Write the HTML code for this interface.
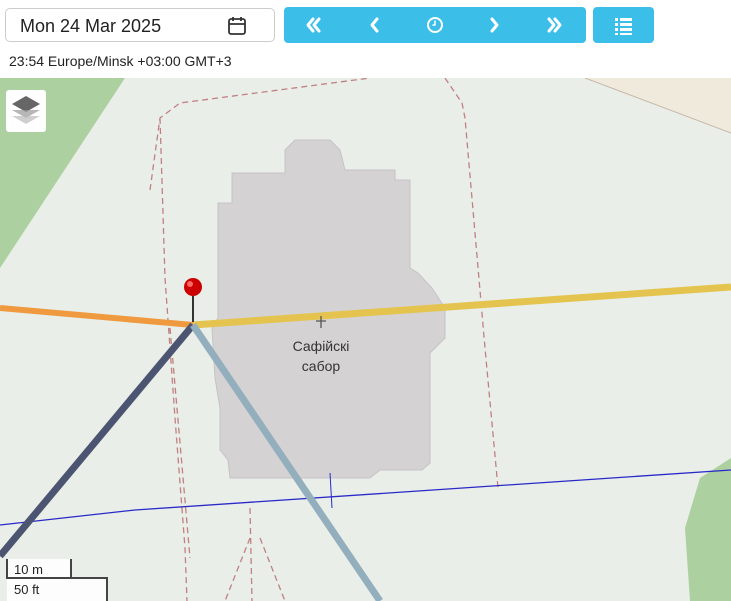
<html><head><style>
body{margin:0;width:731px;height:601px;overflow:hidden;font-family:"Liberation Sans",sans-serif;background:#fff;position:relative}
.date{position:absolute;left:5px;top:8px;width:270px;height:34px;border:1px solid #ccc;border-radius:5px;font-size:18px;line-height:34px;box-sizing:border-box;padding-left:14px;color:#222}
.btns{position:absolute;left:284px;top:7px;width:302px;height:36px;background:#3bbfe9;border-radius:4px}
.b2{position:absolute;left:593px;top:7px;width:61px;height:36px;background:#3bbfe9;border-radius:4px}
.tz{position:absolute;left:9px;top:53px;font-size:14px;color:#222}
</style></head><body>
<div class="date">Mon 24 Mar 2025
<svg style="position:absolute;right:27px;top:7px" width="20" height="20" viewBox="0 0 20 20" fill="none" stroke="#333" stroke-width="1.8"><rect x="2" y="3" width="16" height="15" rx="2"/><path d="M2 8H18M6 1v4M14 1v4"/></svg></div>
<div class="btns"><svg width="302" height="36" fill="none" stroke="#fff" stroke-width="3" stroke-linecap="round" stroke-linejoin="round">
<path d="M29 12l-5 6 5 6M35 12l-5 6 5 6"/><path d="M93 12l-5 6 5 6"/><circle cx="151" cy="18" r="7" stroke-width="2"/><path d="M151 14v4h-2" stroke-width="1.5"/><path d="M208 12l5 6-5 6"/><path d="M265 12l5 6-5 6M271 12l5 6-5 6"/></svg></div>
<div class="b2"><svg width="61" height="36" fill="#fff"><rect x="22" y="11" width="3" height="3"/><rect x="27" y="11" width="12" height="3"/><rect x="22" y="16" width="3" height="3"/><rect x="27" y="16" width="12" height="3"/><rect x="22" y="21" width="3" height="3"/><rect x="27" y="21" width="12" height="3"/><rect x="22" y="26" width="3" height="2"/><rect x="27" y="26" width="12" height="2"/></svg></div>
<div class="tz">23:54 Europe/Minsk +03:00 GMT+3</div>
<svg style="position:absolute;left:0;top:78px" width="731" height="523">
<rect width="731" height="523" fill="#e9eee9"/>
<polygon points="0,0 125,0 0,190" fill="#acd0a0"/>
<polygon points="585,0 731,0 731,55" fill="#efeadb"/>
<path d="M585 0L731 55" stroke="#c9b9a9"/>
<polygon points="731,380 700,400 685,450 690,523 731,523" fill="#acd0a0"/>
<path d="M150 112 L160 40 L180 25 L370 0 M445 0 L462 25 L465 40 L485 270 L498 410 M160 40 L165 200 L175 340 L185 470 L187 523 M250 430 L252 523 M170 250 L190 480 M250 460 L225 523 M260 460 L285 523" stroke="#c08080" stroke-width="1.3" stroke-dasharray="6,4" fill="none"/>
<polygon points="285,72 295,62 330,62 340,72 345,92 395,92 395,102 410,102 410,190 418,195 432,210 445,230 445,260 430,275 430,385 422,392 380,392 370,400 230,400 228,382 220,372 220,330 215,300 212,250 218,240 218,125 232,125 232,95 285,95" fill="#d4d2d3" stroke="#c5c3c5"/>
<path d="M0 447 L135 432 L731 392" stroke="#2929c8" stroke-width="1.3" fill="none"/>
<path d="M330 395 L332 430" stroke="#2929c8"/>
<path d="M0 230 L193 247" stroke="#f09a40" stroke-width="6"/>
<path d="M193 247 L731 209" stroke="#e4c44e" stroke-width="7"/>
<path d="M193 247 L0 478" stroke="#4b5470" stroke-width="7"/>
<path d="M193 247 L380 523" stroke="#93aebd" stroke-width="7"/>
<path d="M316 243h10M321 238v12" stroke="#555" stroke-width="1.3"/>
<text x="321" y="273" font-size="14" fill="#333" text-anchor="middle">Сафійскі</text>
<text x="321" y="293" font-size="14" fill="#333" text-anchor="middle">сабор</text>
<path d="M193 218v26" stroke="#333" stroke-width="2"/>
<circle cx="193" cy="209" r="9" fill="#c00"/><circle cx="190" cy="206" r="3" fill="#f66"/>
<rect x="6" y="12" width="40" height="42" fill="#fff" rx="3"/>
<path d="M26 18l14 8-14 8-14-8z" fill="#666"/><path d="M12 32l14 8 14-8" fill="#999" opacity=".7"/><path d="M12 38l14 8 14-8" fill="#bbb" opacity=".7"/>
<rect x="7" y="481" width="64" height="19" fill="#fff" opacity=".85"/><path d="M7 481v19h64v-19" stroke="#444" stroke-width="2" fill="none"/>
<rect x="7" y="500" width="100" height="23" fill="#fff" opacity=".85"/><path d="M7 500h100v23" stroke="#444" stroke-width="2" fill="none"/>
<text x="14" y="496" font-size="13" fill="#222">10 m</text>
<text x="14" y="516" font-size="13" fill="#222">50 ft</text>
</svg>
</body></html>
